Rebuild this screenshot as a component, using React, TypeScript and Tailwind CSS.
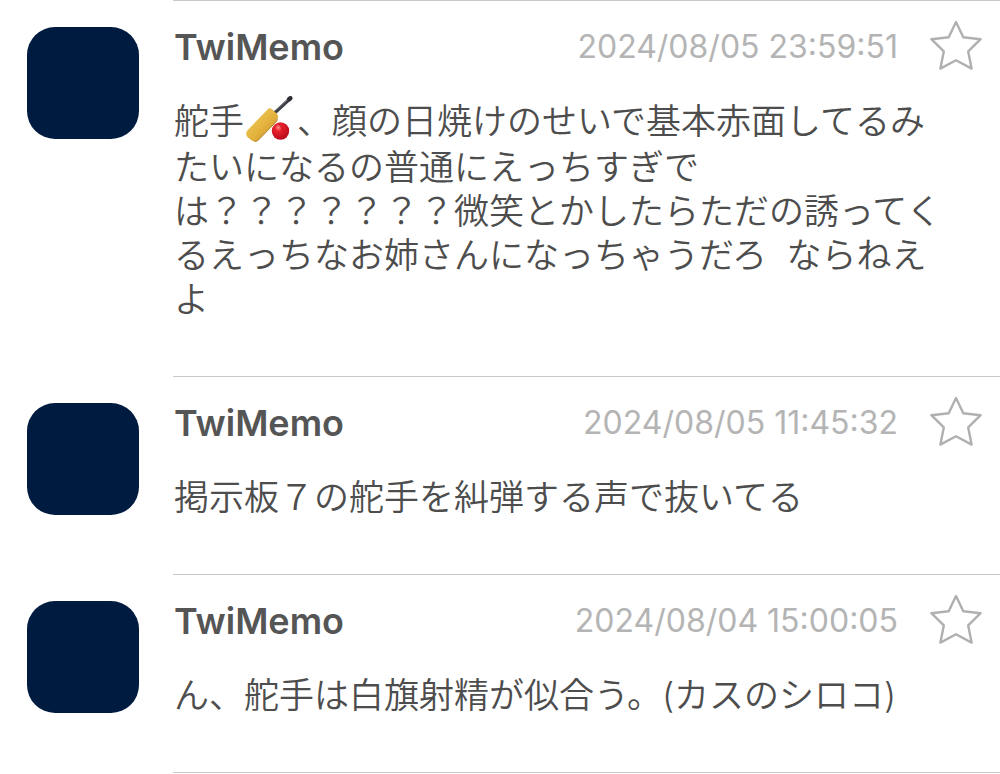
import { Fragment, useState } from "react";

type Memo = {
    id: number;
    name: string;
    date: string;
    text: string;
};

const memos: Memo[] = [
    {
        id: 1,
        name: "TwiMemo",
        date: "2024/08/05 23:59:51",
        text: "舵手🏏、顔の日焼けのせいで基本赤面してるみたいになるの普通にえっちすぎでは？？？？？？？微笑とかしたらただの誘ってくるえっちなお姉さんになっちゃうだろ  ならねえよ",
    },
    {
        id: 2,
        name: "TwiMemo",
        date: "2024/08/05 11:45:32",
        text: "掲示板７の舵手を糾弾する声で抜いてる",
    },
    {
        id: 3,
        name: "TwiMemo",
        date: "2024/08/04 15:00:05",
        text: "ん、舵手は白旗射精が似合う。(カスのシロコ)",
    },
];

function CricketBat() {
    return (
        <svg role="img" aria-label="🏏" viewBox="0 0 50 46" className="-mt-1 mb-[3px] inline-block h-[46px] w-[53px] align-[-11px]">
            <defs>
                <linearGradient id="blade" x1="0" y1="0" x2="1" y2="1">
                    <stop offset="0" stopColor="#f3cf62" />
                    <stop offset="0.55" stopColor="#e3b23c" />
                    <stop offset="1" stopColor="#b9852a" />
                </linearGradient>
                <radialGradient id="ball" cx="0.38" cy="0.3" r="0.7">
                    <stop offset="0" stopColor="#ff8f8a" />
                    <stop offset="0.3" stopColor="#e8212b" />
                    <stop offset="1" stopColor="#b80a1c" />
                </radialGradient>
            </defs>
            <path d="M28 18L44.5 2.8" stroke="#3d4045" strokeWidth="3.4" strokeLinecap="round" />
            <path d="M43.6 3.2L44.8 2.2" stroke="#2b2d31" strokeWidth="4.4" strokeLinecap="round" />
            <path d="M31 13.5L41.5 4" stroke="#8a8d92" strokeWidth="0.8" strokeLinecap="round" />
            <path d="M22.5 13Q24.5 11.4 26.6 13.2L31.6 18Q33 19.8 32.2 22.2Q31.8 24.4 30.4 26L13 44Q10 46.6 6.6 44.8L1.8 41Q-0.4 37.8 1.8 34.4Z" fill="url(#blade)" />
            <path d="M32 23.4Q31.6 24.8 30.4 26L13 44Q11.4 45.4 9 45.5" fill="none" stroke="#a87524" strokeWidth="0.8" />
            <circle cx="35" cy="35" r="8.7" fill="url(#ball)" />
            <path d="M33 27.2Q38.4 33.5 40 41.5" fill="none" stroke="#c41420" strokeWidth="0.8" />
        </svg>
    );
}

function MemoText({ text }: { text: string }) {
    return (
        <p className="mt-7 pr-[46px] pl-px text-[35px] leading-[44px] font-[350] whitespace-pre-wrap text-[#4d4d4d]">
            {text.split("🏏").map((part, i) => (
                <Fragment key={i}>
                    {i > 0 && <CricketBat />}
                    {part}
                </Fragment>
            ))}
        </p>
    );
}

function StarButton() {
    const [starred, setStarred] = useState(false);

    return (
        <button
            type="button"
            aria-label="お気に入り"
            aria-pressed={starred}
            onClick={() => setStarred(!starred)}
            className="shrink-0 cursor-pointer"
        >
            <svg viewBox="0 0 52 50" className="h-[50px] w-[52px]" aria-hidden="true">
                <path
                    d="M26 1L33.3 16.2L50.6 18.2L38.2 30.4L41.6 47.6L26 39.2L10.4 47.6L13.8 30.4L1.4 18.2L18.7 16.2Z"
                    fill={starred ? "#b2b2b2" : "none"}
                    stroke="#b0b0b0"
                    strokeWidth="2.4"
                    strokeLinejoin="round"
                />
            </svg>
        </button>
    );
}

function MemoRow({ memo }: { memo: Memo }) {
    return (
        <article className="flex gap-[34px] pl-[27px]">
            <div className="mt-[27px] size-28 shrink-0 rounded-[28px] bg-[#001b40]" />
            <div className="min-w-0 flex-1 border-t border-[#c8c8c8] pt-5 pb-[55px]">
                <header className="flex h-[50px] items-center pr-[18px] pl-px">
                    <h2 className="flex-1 pt-0.5 text-4xl leading-10 font-semibold text-[#555555]">{memo.name}</h2>
                    <time className="mr-8 pt-0.5 text-[32px] leading-10 text-[#b4b4b4]">{memo.date}</time>
                    <StarButton />
                </header>
                <MemoText text={memo.text} />
            </div>
        </article>
    );
}

export default function App() {
    return (
        <main lang="ja" className="min-h-screen bg-white font-['Inter','Noto_Sans_CJK_JP',sans-serif]">
            {memos.map((memo) => (
                <MemoRow key={memo.id} memo={memo} />
            ))}
            <div className="ml-[173px] border-t border-[#c8c8c8]" />
        </main>
    );
}
